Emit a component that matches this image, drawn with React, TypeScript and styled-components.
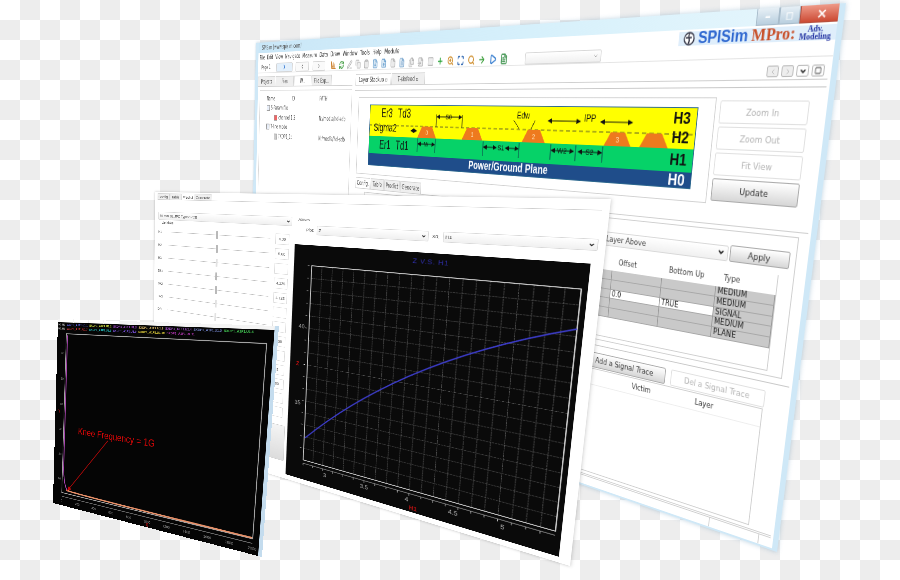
import styled, { createGlobalStyle } from 'styled-components';
import {
  ArrowRight, BarChart3, ChevronDown, ChevronLeft, ChevronRight, Clipboard, Copy, File, FileDown, FileInput,
  FileText, FileUp, Files, Maximize, PenLine, Play, Plus, RefreshCw, Search, Square, ZoomIn,
} from 'lucide-react';

type Corner = [number, number];

// maps a flat w x h window onto four screen corners (TL, TR, BR, BL)
function quadMatrix(w: number, h: number, q: Corner[]) {
  const [[x0, y0], [x1, y1], [x2, y2], [x3, y3]] = q;
  const dx1 = x1 - x2, dx2 = x3 - x2, sx = x0 - x1 + x2 - x3;
  const dy1 = y1 - y2, dy2 = y3 - y2, sy = y0 - y1 + y2 - y3;
  const det = dx1 * dy2 - dx2 * dy1;
  const g = (sx * dy2 - dx2 * sy) / det;
  const k = (dx1 * sy - sx * dy1) / det;
  const a = x1 - x0 + g * x1, b = x3 - x0 + k * x3;
  const d = y1 - y0 + g * y1, e = y3 - y0 + k * y3;
  return `matrix3d(${a / w},${d / w},0,${g / w},${b / h},${e / h},0,${k / h},0,0,1,0,${x0},${y0},0,1)`;
}

const GlobalStyle = createGlobalStyle`
  html, body { margin: 0; padding: 0; background: #fff; }
  body { font-family: "DejaVu Sans", sans-serif; }
  * { box-sizing: border-box; }
`;

const Canvas = styled.div`
  position: relative;
  width: 900px;
  height: 580px;
  overflow: hidden;
  background: repeating-conic-gradient(#ededed 0 25%, #fff 0 50%, #ededed 0 75%, #fff 0 100%) 0 0 / 40px 40px;
`;

const Desktop = styled.div`
  position: absolute;
  inset: 0;
  filter: blur(0.55px);
`;

const Win = styled.div<{ $w: number; $h: number; $bg?: string }>`
  position: absolute;
  left: 0;
  top: 0;
  width: ${(p) => p.$w}px;
  height: ${(p) => p.$h}px;
  transform-origin: 0 0;
  background: ${(p) => p.$bg || '#fff'};
  overflow: hidden;
  color: #444;
`;

/* main window */
const MainWin = styled(Win)`
  display: flex;
  flex-direction: column;
  border: solid #cfe8f7;
  border-width: 0 6px 2px 8px;
  box-shadow: 0 0 5px rgba(90, 140, 180, 0.4);
  font-size: 9px;
`;

const TitleBar = styled.div`
  height: 16px;
  flex: none;
  margin: 0 -6px 0 -8px;
  padding-left: 18px;
  display: flex;
  align-items: center;
  justify-content: space-between;
  background: linear-gradient(90deg, #c9e6f7, #d6f0fb 60%, #e6f6fc);
  font-size: 8.5px;
  color: #555;
`;

const TitleControls = styled.div`
  display: flex;
  height: 16px;
`;

const Ctl = styled.div<{ $w: number; $close?: boolean }>`
  width: ${(p) => p.$w}px;
  display: flex;
  align-items: center;
  justify-content: center;
  color: #fff;
  font-size: 13px;
  font-weight: bold;
  border: 1px solid ${(p) => (p.$close ? '#b5503f' : '#a8bccb')};
  border-top: 0;
  background: ${(p) => (p.$close ? 'linear-gradient(#ee9a88, #cc4a34)' : 'linear-gradient(#e6eff5, #b9cfdf)')};
`;

const MenuBar = styled.div`
  height: 13px;
  flex: none;
  display: flex;
  align-items: center;
  gap: 6px;
  padding-left: 4px;
  font-size: 9px;
  color: #333;
  background: #fff;
`;

const Logo = styled.div`
  margin-left: auto;
  margin-top: 5px;
  width: 176px;
  height: 14px;
  display: flex;
  align-items: center;
  gap: 4px;
  padding-left: 6px;
  background: #dfeefb;
  white-space: nowrap;
`;

const LogoSpi = styled.span`
  font: bold 17px "Liberation Sans", sans-serif;
  color: #2f68d0;
`;

const LogoPro = styled.span`
  font: bold 17px "Liberation Serif", serif;
  color: #c8502a;
`;

const LogoAdv = styled.span`
  font: bold 8px/7px "Liberation Serif", serif;
  color: #1f2fa0;
  text-align: center;
`;

const Toolbar = styled.div`
  height: 16px;
  flex: none;
  margin-top: 2px;
  display: flex;
  align-items: center;
  padding-left: 6px;
  border-bottom: 1px solid #e4e4e4;
`;

const PageField = styled.div`
  width: 46px;
  font-size: 8px;
  padding-left: 3px;
`;

const NavBtn = styled.div<{ $w: number; $mr?: number; $blue?: boolean }>`
  width: ${(p) => p.$w}px;
  height: 14px;
  margin-right: ${(p) => p.$mr || 0}px;
  flex: none;
  display: flex;
  align-items: center;
  justify-content: center;
  border: 1px solid #d4d4d4;
  border-radius: 2px;
  background: ${(p) => (p.$blue ? '#e4f0fb' : '#fafafa')};
  color: ${(p) => (p.$blue ? '#2a72d0' : '#555')};
`;

const ToolIcons = styled.div`
  display: flex;
  align-items: center;
  width: 364px;
  justify-content: space-between;
  margin-right: 29px;
`;

const Combo = styled.div<{ $w?: number; $h?: number }>`
  width: ${(p) => (p.$w ? p.$w + 'px' : 'auto')};
  height: ${(p) => p.$h || 16}px;
  flex: ${(p) => (p.$w ? 'none' : 1)};
  display: flex;
  align-items: center;
  justify-content: space-between;
  padding: 0 3px;
  border: 1px solid #d8d8d8;
  border-radius: 2px;
  background: linear-gradient(#fff, #f0f0f0);
  font-size: 9px;
  color: #444;
`;

const MainBody = styled.div`
  flex: 1;
  display: grid;
  grid-template-columns: 250px 1fr;
  gap: 7px;
  padding-top: 5px;
  min-height: 0;
`;

const TabRow = styled.div`
  height: 16px;
  flex: none;
  display: flex;
  align-items: flex-end;
  gap: 1px;
  border-bottom: 1px solid #cfcfcf;
`;

const Tab = styled.div<{ $on?: boolean; $w: number }>`
  width: ${(p) => p.$w}px;
  height: 15px;
  flex: none;
  display: flex;
  align-items: center;
  justify-content: center;
  gap: 3px;
  border: 1px solid #d4d4d4;
  border-bottom: 0;
  font-size: 8px;
  background: ${(p) => (p.$on ? '#fff' : '#efefef')};
  white-space: nowrap;
`;

const LeftPane = styled.div`
  display: flex;
  flex-direction: column;
`;

const TreeBox = styled.div`
  flex: 1;
  margin: 5px 0 0 6px;
  padding: 5px 6px 0 26px;
  border: 1px solid #d8d8d8;
`;

const TreeRow = styled.div`
  height: 14.5px;
  display: grid;
  grid-template-columns: 64px 73px 1fr;
  align-items: center;
  font-size: 8px;
  color: #555;
  white-space: nowrap;
`;

const TreeName = styled.div<{ $indent?: boolean }>`
  display: flex;
  align-items: center;
  gap: 3px;
  margin-left: ${(p) => (p.$indent ? '16px' : '-6px')};
`;

const TreeIcon = styled.span<{ $c: string }>`
  width: 9px;
  height: 9px;
  flex: none;
  background: ${(p) => p.$c};
  border: 1px solid #999;
`;

const RightPane = styled.div`
  display: flex;
  flex-direction: column;
  border-right: 1px solid #cfcfcf;
  padding-right: 4px;
  margin-right: -2px;
`;

const Pager = styled.div`
  margin: 0 4px 0 auto;
  display: flex;
  gap: 3px;
  align-self: center;
`;

const PagerBtn = styled.div<{ $off?: boolean }>`
  width: 13px;
  height: 11px;
  display: flex;
  align-items: center;
  justify-content: center;
  border: 1px solid #bbb;
  border-radius: 2px;
  background: ${(p) => (p.$off ? '#eee' : '#fdfdfd')};
  color: ${(p) => (p.$off ? '#aaa' : '#222')};
`;

const ThinRule = styled.div`
  height: 7px;
  flex: none;
  border-bottom: 1px solid #c8c8c8;
`;

const TopSplit = styled.div`
  margin: 9px 0 0 9px;
  display: grid;
  flex: none;
  grid-template-columns: 598px 99px;
  gap: 5px;
  height: 107px;
`;

const DiagramFrame = styled.div`
  border: 1px solid #d2d2d2;
  padding: 9px 0 0 26px;
`;

const ZoomCol = styled.div`
  display: flex;
  flex-direction: column;
  gap: 3px;
  padding-top: 3px;
`;

const SideBtn = styled.div<{ $on?: boolean }>`
  height: 23px;
  display: flex;
  align-items: center;
  justify-content: center;
  border: 1px solid ${(p) => (p.$on ? '#aaa' : '#e0e0e0')};
  border-radius: 2px;
  background: ${(p) => (p.$on ? 'linear-gradient(#fff, #d6d6d6)' : '#fff')};
  color: ${(p) => (p.$on ? '#333' : '#b4b4b4')};
  font-size: 9px;
`;

const Svg = styled.svg`
  display: block;
`;

const ConfigTabs = styled(TabRow)`
  margin: 6px 0 0 9px;
  height: 15px;
`;

const GroupArea = styled.div`
  margin: 4px 9px 0 30px;
  flex: none;
  height: 141px;
  border: 1px solid #cfcfcf;
  padding: 14px 6px 0 6px;
  display: flex;
  flex-direction: column;
`;

const LayerRow = styled.div`
  display: flex;
  align-items: center;
  justify-content: flex-end;
  flex: none;
`;

const ApplyBtn = styled(SideBtn)`
  width: 68px;
  height: 17px;
  flex: none;
  margin-left: 2px;
`;

const StackFrame = styled.div`
  margin: 7px 10px 0 0;
  height: 97px;
  flex: none;
  border: 1px solid #cfcfcf;
  border-top: 0;
`;

const StackGrid = styled.div`
  display: grid;
  grid-template-columns: repeat(4, 1fr);
  grid-template-rows: 20px repeat(5, 10.8px);
  margin-left: auto;
  width: 276px;
  font-size: 8.5px;
`;

const StackHead = styled.div`
  display: flex;
  align-items: center;
  padding-left: 8px;
  color: #444;
`;

const StackCell = styled.div<{ $white?: boolean }>`
  background: ${(p) => (p.$white ? '#fff' : '#c9c9c9')};
  border-right: 1px solid #999;
  border-bottom: 1px solid #a8a8a8;
  line-height: 9px;
  padding-left: 2px;
  color: #222;
  overflow: hidden;
`;

const Rule = styled.div`
  margin: 6px 0 0 9px;
  flex: none;
  border-top: 1px solid #c8c8c8;
`;

const SignalRow = styled.div`
  margin: 8px 25px 0 auto;
  display: flex;
  flex: none;
  gap: 7px;
`;

const SignalBtn = styled(SideBtn)`
  height: 18px;
  width: 116px;
`;

const TraceFrame = styled.div`
  margin: 1px 26px 0 auto;
  width: 300px;
  height: 125px;
  flex: none;
  border: 1px solid #cfcfcf;
  display: grid;
  grid-template-columns: 101px 90px 1fr;
  grid-template-rows: 19px;
  font-size: 8.5px;
  color: #333;
`;

const TraceHead = styled.div<{ $pr?: number }>`
  display: flex;
  align-items: center;
  justify-content: center;
  padding-right: ${(p) => p.$pr || 0}px;
  border-bottom: 1px solid #eee;
`;

const StatusBar = styled.div`
  margin-top: auto;
  height: 13px;
  flex: none;
  display: flex;
  justify-content: flex-end;
  border-top: 3px double #cfcfcf;
`;

const StatusCell = styled.div<{ $w: number }>`
  width: ${(p) => p.$w}px;
  border-left: 1px solid #cfcfcf;
`;

/* config window */
const ConfigWin = styled(Win)`
  display: flex;
  flex-direction: column;
  padding: 3px 10px 0 8px;
  box-shadow: 0 0 6px rgba(0, 0, 0, 0.25);
  font-size: 8px;
  font-family: "Liberation Sans", sans-serif;
`;

const ConfigTab = styled(Tab)`
  font-size: 9.5px;
`;

const ConfigGrid = styled.div`
  flex: 1;
  display: grid;
  grid-template-columns: 355px 1fr;
  gap: 6px;
  min-height: 0;
`;

const VarCol = styled.div`
  display: flex;
  flex-direction: column;
  padding: 30px 0 0 3px;
`;

const VarLabel = styled.div`
  margin: 2px 0 0 10px;
  height: 11px;
  font-size: 8.5px;
`;

const SliderRow = styled.div`
  height: 33px;
  flex: none;
  display: grid;
  grid-template-columns: 30px 271px 26px;
  align-items: center;
  font-size: 8.5px;
  color: #555;
`;

const Track = styled.div<{ $show?: boolean }>`
  position: relative;
  height: 1px;
  background: ${(p) => (p.$show ? '#bdbdbd' : 'transparent')};
`;

const Handle = styled.span<{ $soft?: boolean }>`
  position: absolute;
  left: 135px;
  top: -9px;
  width: 5px;
  height: 19px;
  border-radius: 1px;
  background: ${(p) => (p.$soft ? '#e2e2e2' : '#b9b9b9')};
`;

const ValueBox = styled.div`
  grid-column: 3;
  margin-left: 12px;
  width: 32px;
  height: 24px;
  display: flex;
  align-items: center;
  justify-content: center;
  border: 1px solid #dcdcdc;
  font-size: 8.5px;
  color: #555;
`;

const RunBtn = styled.div`
  margin: 14px 0 0;
  height: 84px;
  flex: none;
  border: 1px solid #cfcfcf;
  border-radius: 3px;
  background: linear-gradient(#f4f4f4, #dcdcdc);
`;

const AxisCol = styled.div`
  display: flex;
  flex-direction: column;
  min-width: 0;
`;

const AxisTitle = styled.div`
  margin-top: 30px;
  height: 12px;
  flex: none;
  padding-left: 6px;
  font-size: 8.5px;
`;

const PlotRow = styled.div`
  height: 30px;
  flex: none;
  margin-bottom: 14px;
  display: flex;
  align-items: center;
  gap: 6px;
  padding-left: 24px;
  font-size: 8.5px;
`;

/* scope window */
const ScopeWin = styled(Win)`
  display: flex;
  flex-direction: column;
  border-right: 9px solid #c4dcee;
  font-family: "Liberation Sans", sans-serif;
`;

const ScopeTabs = styled.div`
  height: 8px;
  flex: none;
  display: flex;
  gap: 2px;
  background: #f4f4f4;
  padding-left: 6px;
`;

const ScopeTab = styled.div`
  width: 46px;
  border: 1px solid #c8c8c8;
  border-top: 0;
  background: #fff;
`;

const Legend = styled.div`
  height: 20px;
  flex: none;
  padding: 1px 0 0 2px;
  font-size: 8px;
  font-weight: bold;
  line-height: 10px;
  white-space: nowrap;
`;

const LegendRow = styled.div`
  display: flex;
  gap: 5px;
`;

const LegendItem = styled.span<{ $c: string }>`
  color: ${(p) => p.$c};
`;

const MENU = ['File', 'Edit', 'View', 'Navigate', 'Measure', 'Data', 'Draw', 'Window', 'Tools', 'Help', 'Module'];

const TOOL_ICONS = [
  { I: BarChart3, c: '#c9781e' }, { I: RefreshCw, c: '#3d9a3d' }, { I: PenLine, c: '#b5b5b5' },
  { I: Copy, c: '#bdbdbd' }, { I: Clipboard, c: '#b0b0b0' }, { I: FileDown, c: '#6aa0cf' },
  { I: FileUp, c: '#6aa0cf' }, { I: File, c: '#b5b5b5' }, { I: FileText, c: '#7ea9d0' },
  { I: Files, c: '#b5b5b5' }, { I: FileInput, c: '#b5b5b5' }, { I: Square, c: '#bbbbbb' },
  { I: Plus, c: '#20a030' }, { I: ZoomIn, c: '#d09030' }, { I: Maximize, c: '#3a6fb5' },
  { I: Search, c: '#d09030' }, { I: ArrowRight, c: '#3fa03f' }, { I: Play, c: '#3a80d0' },
  { I: FileText, c: '#4b9a5a' },
];

const STACK_ROWS = [
  ['', '', '', 'MEDIUM'],
  ['', '', '', 'MEDIUM'],
  ['', '0.0', 'TRUE', 'SIGNAL'],
  ['', '', '', 'MEDIUM'],
  ['', '', '', 'PLANE'],
];

const VARS = [
  { n: 'H1', v: '4.00', s: true }, { n: 'H2', v: '5.00', s: true }, { n: 'H3', v: '', s: true },
  { n: 'Dk1', v: '4.125', s: true }, { n: 'Dk2', v: '4.125', s: true }, { n: 'Dk3', v: '', s: true },
  { n: 'Df1', v: '', s: true }, { n: '', v: '1.50', s: false }, { n: '', v: '', s: false },
  { n: '', v: '5', s: false }, { n: '', v: '00', s: false }, { n: '', v: '', s: false },
  { n: '', v: '', s: false },
];

const LEGEND_A: [string, string][] = [
  ['#9a9a9a', 'H1:H2'], ['#5a60e0', 'SXDP1_A1F1.U1.1'], ['#c8d840', 'SXDP1_A1F1.U1.2'], ['#b050d8', 'SXDP1_A1F1.U1.3'],
  ['#d8b868', 'SXDP1_A1F1.U1.3'], ['#a050c8', 'SXDP1_A1F1.U1.4'], ['#6878b8', 'SXDP1_A1F1.U1.5'], ['#40c050', 'SXDP1_A1F1.U1.6'],
];
const LEGEND_B: [string, string][] = [
  ['#9a9a9a', 'H1:H2'], ['#d83838', 'SXDP1_A1F1.U1.7'], ['#20b0b0', 'SXDP1_A1F1.U1.8'], ['#7850d8', 'SXDP1_A1F1.U1.9'],
  ['#d0c038', 'SXDP1_A1F1.U1.10'], ['#b838b8', 'SXDP1_A1F1.U1.11'],
];

const TRAPS = [
  { x: 124, n: '0' }, { x: 212, n: '1' }, { x: 319, n: '2' }, { x: 447, n: '3' }, { x: 497, n: '' },
];

function Arrow({ x1, x2, y }: { x1: number; x2: number; y: number }) {
  return (
    <g fill="#111" stroke="#111">
      <line x1={x1 + 5} x2={x2 - 5} y1={y} y2={y} strokeWidth={1} />
      <polygon points={`${x1},${y} ${x1 + 7},${y - 3} ${x1 + 7},${y + 3}`} strokeWidth={0} />
      <polygon points={`${x2},${y} ${x2 - 7},${y - 3} ${x2 - 7},${y + 3}`} strokeWidth={0} />
    </g>
  );
}

function Stackup() {
  const sans = '"Liberation Sans", sans-serif';
  return (
    <Svg width={550} height={84} viewBox="0 0 550 84">
      <rect width={550} height={43} fill="#ffff00" />
      <rect y={43} width={550} height={24} fill="#06d268" />
      <rect y={67} width={550} height={17} fill="#1f4d8a" />
      <rect x={0.5} y={0.5} width={549} height={83} fill="none" stroke="#2f6a90" />
      <line x1={0} x2={550} y1={28} y2={28} stroke="#333" strokeDasharray="6 4" strokeWidth={0.8} />
      {TRAPS.map((t) => (
        <g key={t.x}>
          <polygon points={`${t.x - 10},28 ${t.x + 10},28 ${t.x + 19},43 ${t.x - 19},43`} fill="#ee7a1e" />
          <text x={t.x} y={39} fontSize={9} textAnchor="middle" fill="#ffd9a8" fontFamily={sans}>{t.n}</text>
        </g>
      ))}
      <text x={26} y={17} fontSize={16} fontFamily={sans} fill="#111">Er3</text>
      <text x={62} y={17} fontSize={16} fontFamily={sans} fill="#111">Td3</text>
      <text x={10} y={36} fontSize={15} fontFamily={sans} fill="#111">Sigma2</text>
      <Arrow x1={90} x2={104} y={34} />
      <text x={24} y={60} fontSize={16} fontFamily={sans} fill="#111">Er1</text>
      <text x={60} y={60} fontSize={16} fontFamily={sans} fill="#111">Td1</text>
      <text x={166} y={18} fontSize={10} textAnchor="middle" fontFamily={sans} fill="#111">S0</text>
      <Arrow x1={142} x2={192} y={15} />
      <line x1={142} x2={142} y1={12} y2={28} stroke="#111" />
      <line x1={192} x2={192} y1={12} y2={28} stroke="#111" />
      <text x={300} y={15} fontSize={11} textAnchor="middle" fontFamily={sans} fill="#111">Edw</text>
      <line x1={284} x2={294} y1={17} y2={27} stroke="#111" />
      <line x1={320} x2={314} y1={17} y2={27} stroke="#111" />
      <text x={405} y={17} fontSize={11} textAnchor="middle" fontFamily={sans} fill="#111">IPP</text>
      <Arrow x1={340} x2={392} y={17} />
      <Arrow x1={420} x2={467} y={17} />
      <text x={124} y={54} fontSize={9} textAnchor="middle" fontFamily={sans} fill="#111">W</text>
      <Arrow x1={106} x2={142} y={51} />
      <text x={265} y={54} fontSize={10} textAnchor="middle" fontFamily={sans} fill="#111">S1</text>
      <Arrow x1={233} x2={258} y={51} />
      <Arrow x1={272} x2={296} y={51} />
      <text x={366} y={54} fontSize={10} textAnchor="middle" fontFamily={sans} fill="#111">W2</text>
      <Arrow x1={348} x2={385} y={51} />
      <text x={408} y={54} fontSize={10} textAnchor="middle" fontFamily={sans} fill="#111">S2</text>
      <Arrow x1={390} x2={427} y={51} />
      {[106, 142, 233, 296, 348, 387, 427].map((x) => (
        <line key={x} x1={x} x2={x} y1={44} y2={62} stroke="#114" strokeWidth={0.8} />
      ))}
      <text x={277} y={79} fontSize={14} fontWeight="bold" textAnchor="middle" fontFamily={sans} fill="#fff">Power/Ground Plane</text>
      <text x={520} y={17} fontSize={17} fontWeight="bold" fontFamily={sans} fill="#111">H3</text>
      <text x={520} y={37} fontSize={17} fontWeight="bold" fontFamily={sans} fill="#111">H2</text>
      <text x={520} y={60} fontSize={17} fontWeight="bold" fontFamily={sans} fill="#111">H1</text>
      <text x={520} y={81} fontSize={17} fontWeight="bold" fontFamily={sans} fill="#fff">H0</text>
    </Svg>
  );
}

function GlobeMark() {
  return (
    <Svg width={14} height={14} viewBox="0 0 14 14">
      <circle cx={7} cy={7} r={6} fill="#fff" stroke="#334" strokeWidth={1.4} />
      <path d="M7 2 C4 5 10 8 6 12 M3 6 H10" fill="none" stroke="#334" strokeWidth={1.4} />
    </Svg>
  );
}

function ZPlot() {
  const sans = '"Liberation Sans", sans-serif';
  const vs = Array.from({ length: 21 }, (_, i) => 40 + (470 * i) / 21);
  const hs = Array.from({ length: 16 }, (_, i) => 45 + (445 * i) / 16);
  return (
    <Svg width={514} height={537} viewBox="0 0 519 537">
      <rect width={519} height={537} fill="#0a0a0a" />
      {vs.map((x) => <line key={x} x1={x} x2={x} y1={45} y2={490} stroke="#5e5e5e" strokeWidth={0.9} strokeDasharray="4 1" />)}
      {hs.map((y) => <line key={y} x1={40} x2={510} y1={y} y2={y} stroke="#5e5e5e" strokeWidth={0.9} strokeDasharray="4 1" />)}
      <rect x={40} y={45} width={470} height={445} fill="none" stroke="#e4e4e4" strokeWidth={1.7} />
      <line x1={40} x2={510} y1={498} y2={498} stroke="#cfcfcf" strokeWidth={1.2} />
      {vs.map((x) => <line key={x} x1={x} x2={x} y1={498} y2={503} stroke="#cfcfcf" />)}
      {hs.map((y) => <line key={y} x1={31} x2={35} y1={y} y2={y} stroke="#cfcfcf" />)}
      <path d="M42 437 Q240 214 510 115" fill="none" stroke="#3c3cc8" strokeWidth={2.6} />
      <text x={273} y={22} fontSize={13} textAnchor="middle" letterSpacing={1} fontFamily={sans} fill="#3030b0">Z V.S. H1</text>
      {[['3', 90], ['3.5', 175], ['4', 260], ['4.5', 345], ['5', 429]].map(([l, x]) => (
        <text key={l} x={x} y={516} fontSize={12} textAnchor="middle" fontFamily={sans} fill="#bdbdbd">{l}</text>
      ))}
      <text x={30} y={186} fontSize={12} textAnchor="end" fontFamily={sans} fill="#bdbdbd">40</text>
      <text x={28} y={362} fontSize={12} textAnchor="end" fontFamily={sans} fill="#bdbdbd">35</text>
      <text x={273} y={532} fontSize={12} fontWeight="bold" textAnchor="middle" fontFamily={sans} fill="#c01010">H1</text>
      <text x={14} y={272} fontSize={12} fontWeight="bold" fontFamily={sans} fill="#c01010">Z</text>
    </Svg>
  );
}

function KneePlot() {
  const sans = '"Liberation Sans", sans-serif';
  return (
    <Svg width={591} height={452} viewBox="0 0 591 452">
      <rect x={30} y={8} width={546} height={410} fill="none" stroke="#a2a2a2" strokeWidth={2.2} />
      <line x1={30} x2={576} y1={428} y2={428} stroke="#888" strokeWidth={1.6} />
      {Array.from({ length: 11 }, (_, i) => 30 + i * 54.6).map((x, i) => (
        <text key={x} x={x} y={442} fontSize={9} textAnchor="middle" fontFamily={sans} fill="#888">{i * 200}</text>
      ))}
      {[60, 125, 190, 255, 320, 385].map((y, i) => (
        <text key={y} x={25} y={y} fontSize={9} textAnchor="end" fontFamily={sans} fill="#888">{60 - i * 10}</text>
      ))}
      <path d="M34 12 L34 340 Q34 395 50 411" fill="none" stroke="#a844b0" strokeWidth={3} />
      <path d="M46 409 Q60 414 575 416" fill="none" stroke="#e89068" strokeWidth={3.5} />
      <text x={79} y={258} fontSize={24} fontFamily={sans} fill="#c80808" stroke="#c80808" strokeWidth={0.2}>Knee Frequency = 1G</text>
      <line x1={176} x2={54} y1={262} y2={404} stroke="#a80808" strokeWidth={2} />
      <polygon points="48,410 54,396 62,404" fill="#c00808" />
      <text x={10} y={210} fontSize={10} fontWeight="bold" fontFamily={sans} fill="#c01010">Y</text>
      <text x={300} y={450} fontSize={10} fontWeight="bold" fontFamily={sans} fill="#c01010">X</text>
    </Svg>
  );
}

export default function App() {
  const mainQ: Corner[] = [[256, 43], [846, 3], [777, 552], [250, 370]];
  const cfgQ: Corner[] = [[155, 192], [611, 199], [570, 566], [153, 438]];
  const scopeQ: Corner[] = [[58, 319], [279, 326], [262, 557], [53, 503]];

  return (
    <>
      <GlobalStyle />
      <Canvas>
        <Desktop>
          <MainWin $w={1000} $h={534} style={{ transform: quadMatrix(1000, 534, mainQ) }}>
            <TitleBar>
              SPISim [www.spisim.com]
              <TitleControls>
                <Ctl $w={25}>–</Ctl>
                <Ctl $w={22}>▫</Ctl>
                <Ctl $w={45} $close>×</Ctl>
              </TitleControls>
            </TitleBar>
            <MenuBar>
              {MENU.map((m) => <span key={m}>{m}</span>)}
              <Logo>
                <GlobeMark />
                <LogoSpi>SPISim</LogoSpi>
                <LogoPro>MPro:</LogoPro>
                <LogoAdv>Adv.<br />Modeling</LogoAdv>
              </Logo>
            </MenuBar>
            <Toolbar>
              <PageField>Page 1</PageField>
              <NavBtn $w={45} $mr={8} $blue><ChevronRight size={11} strokeWidth={3} /></NavBtn>
              <NavBtn $w={35} $mr={10}><ChevronLeft size={10} /></NavBtn>
              <NavBtn $w={32} $mr={14}><ChevronRight size={10} /></NavBtn>
              <ToolIcons>
                {TOOL_ICONS.map(({ I, c }, i) => <I key={i} size={13} color={c} fill={i < 12 ? c + '44' : 'none'} strokeWidth={i > 11 ? 3 : 2} />)}
              </ToolIcons>
              <Combo $w={118} $h={14}><span /><ChevronDown size={8} color="#888" /></Combo>
            </Toolbar>
            <MainBody>
              <LeftPane>
                <TabRow>
                  <Tab $w={50}>Projects</Tab>
                  <Tab $w={50}>Files</Tab>
                  <Tab $w={46} $on>W...</Tab>
                  <Tab $w={50}>File Exp...</Tab>
                </TabRow>
                <TreeBox>
                  <TreeRow><TreeName>Name</TreeName><span>ID</span><span>PATH</span></TreeRow>
                  <TreeRow><TreeName><TreeIcon $c="#e8eef8" />S-Param file</TreeName></TreeRow>
                  <TreeRow><TreeName $indent><TreeIcon $c="#e66" />channel 1.3</TreeName><span /><span>N:/media/hd-sdb</span></TreeRow>
                  <TreeRow><TreeName><TreeIcon $c="#e8eef8" />T-line mode</TreeName></TreeRow>
                  <TreeRow><TreeName $indent><TreeIcon $c="#ccc" />TXDP1_1t</TreeName><span /><span>N:/media/hd-sdb</span></TreeRow>
                </TreeBox>
              </LeftPane>
              <RightPane>
                <TabRow>
                  <Tab $w={80} $on>Layer Stackup ▫</Tab>
                  <Tab $w={70}>T-sixfeed ▫</Tab>
                  <Pager>
                    <PagerBtn $off><ChevronLeft size={8} /></PagerBtn>
                    <PagerBtn $off><ChevronRight size={8} /></PagerBtn>
                    <PagerBtn><ChevronDown size={8} strokeWidth={4} /></PagerBtn>
                    <PagerBtn><Square size={7} /></PagerBtn>
                  </Pager>
                </TabRow>
                <ThinRule />
                <TopSplit>
                  <DiagramFrame><Stackup /></DiagramFrame>
                  <ZoomCol>
                    <SideBtn>Zoom In</SideBtn>
                    <SideBtn>Zoom Out</SideBtn>
                    <SideBtn>Fit View</SideBtn>
                    <SideBtn $on>Update</SideBtn>
                  </ZoomCol>
                </TopSplit>
                <ConfigTabs>
                  <Tab $w={34} $on>Config.</Tab>
                  <Tab $w={30}>Table</Tab>
                  <Tab $w={34}>Predict</Tab>
                  <Tab $w={44}>Generate</Tab>
                </ConfigTabs>
                <GroupArea>
                  <LayerRow>
                    <Combo $w={165} $h={16}>Layer Above<ChevronDown size={9} strokeWidth={4} color="#222" /></Combo>
                    <ApplyBtn $on>Apply</ApplyBtn>
                  </LayerRow>
                  <StackFrame>
                    <StackGrid>
                      {['', 'Offset', 'Bottom Up', 'Type'].map((h, i) => <StackHead key={i}>{h}</StackHead>)}
                      {STACK_ROWS.flatMap((row, r) => row.map((c, i) => (
                        <StackCell key={`${r}-${i}`} $white={r === 2 && (i === 1 || i === 2)}>{c}</StackCell>
                      )))}
                    </StackGrid>
                  </StackFrame>
                </GroupArea>
                <Rule />
                <SignalRow>
                  <SignalBtn $on>Add a Signal Trace</SignalBtn>
                  <SignalBtn>Del a Signal Trace</SignalBtn>
                </SignalRow>
                <TraceFrame>
                  <TraceHead>Pair Pitch</TraceHead>
                  <TraceHead>Victim</TraceHead>
                  <TraceHead $pr={30}>Layer</TraceHead>
                </TraceFrame>
                <StatusBar>
                  <StatusCell $w={60} />
                  <StatusCell $w={14} />
                </StatusBar>
              </RightPane>
            </MainBody>
          </MainWin>

          <ConfigWin $w={900} $h={650} style={{ transform: quadMatrix(900, 650, cfgQ) }}>
            <TabRow>
              <ConfigTab $w={36}>Config.</ConfigTab>
              <ConfigTab $w={32}>Table</ConfigTab>
              <ConfigTab $w={36} $on>Predict</ConfigTab>
              <ConfigTab $w={46}>Generate</ConfigTab>
            </TabRow>
            <ConfigGrid>
              <VarCol>
                <Combo $w={350} $h={20}>35 mm BL JPC Type2 PCB<ChevronDown size={9} strokeWidth={4} color="#222" /></Combo>
                <VarLabel>Variables</VarLabel>
                {VARS.map((row, i) => (
                  <SliderRow key={i}>
                    <span>{row.n}</span>
                    <Track $show={row.s}>{row.s && <Handle $soft={row.v === ''} />}</Track>
                    <ValueBox>{row.v}</ValueBox>
                  </SliderRow>
                ))}
                <RunBtn />
              </VarCol>
              <AxisCol>
                <AxisTitle>Axises</AxisTitle>
                <PlotRow>
                  Plot:
                  <Combo $w={217} $h={20}>Z<ChevronDown size={9} strokeWidth={4} color="#222" /></Combo>
                  X0:
                  <Combo $h={20}>H1<ChevronDown size={9} strokeWidth={4} color="#222" /></Combo>
                </PlotRow>
                <ZPlot />
              </AxisCol>
            </ConfigGrid>
          </ConfigWin>

          <ScopeWin $w={600} $h={480} $bg="#050505" style={{ transform: quadMatrix(600, 480, scopeQ) }}>
            <ScopeTabs>
              <ScopeTab /><ScopeTab /><ScopeTab /><ScopeTab />
            </ScopeTabs>
            <Legend>
              <LegendRow>{LEGEND_A.map(([c, t], i) => <LegendItem key={i} $c={c}>{t}</LegendItem>)}</LegendRow>
              <LegendRow>{LEGEND_B.map(([c, t], i) => <LegendItem key={i} $c={c}>{t}</LegendItem>)}</LegendRow>
            </Legend>
            <KneePlot />
          </ScopeWin>
        </Desktop>
      </Canvas>
    </>
  );
}
